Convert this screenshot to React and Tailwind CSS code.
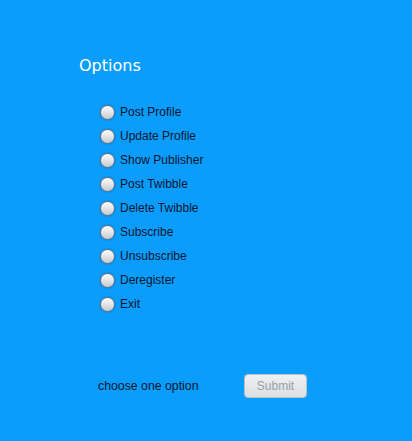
import React from 'react';

const OPTIONS = [
    'Post Profile',
    'Update Profile',
    'Show Publisher',
    'Post Twibble',
    'Delete Twibble',
    'Subscribe',
    'Unsubscribe',
    'Deregister',
    'Exit',
];

function Radio() {
    return (
        <span className="w-[15px] h-[15px] rounded-full border border-[#5f7187] bg-gradient-to-b from-[#ffffff] to-[#c5cad1] shadow-[0_0_0_1px_rgba(60,90,130,0.25)] shrink-0" />
    );
}

export default function App() {
    return (
        <div className="w-[412px] h-[441px] bg-[#0a9dfc] flex flex-col" style={{ fontFamily: '"Liberation Sans", Arial, sans-serif' }}>
            <h1 className="pl-[79px] pt-[55px] text-white text-[16px] leading-[22px]" style={{ fontFamily: '"DejaVu Sans", "Open Sans", sans-serif' }}>
                Options
            </h1>

            <div className="flex flex-col pl-[100px] mt-[23px]">
                {OPTIONS.map((label) => (
                    <label key={label} className="flex items-center gap-[5px] h-[24px] text-[12px] text-[#0b1530]">
                        <Radio />
                        <span>{label}</span>
                    </label>
                ))}
            </div>

            <div className="flex items-center pl-[98px] mt-[58px]">
                <span className="text-[12.3px] text-[#0b1530] w-[146px]">choose one option</span>
                <button disabled className="w-[63px] h-[24px] rounded-[4px] border border-[#b9c0c8] bg-gradient-to-b from-[#eef0f2] to-[#dcdfe3] text-[12px] text-[#9aa0a8]">
                    Submit
                </button>
            </div>
        </div>
    );
}
